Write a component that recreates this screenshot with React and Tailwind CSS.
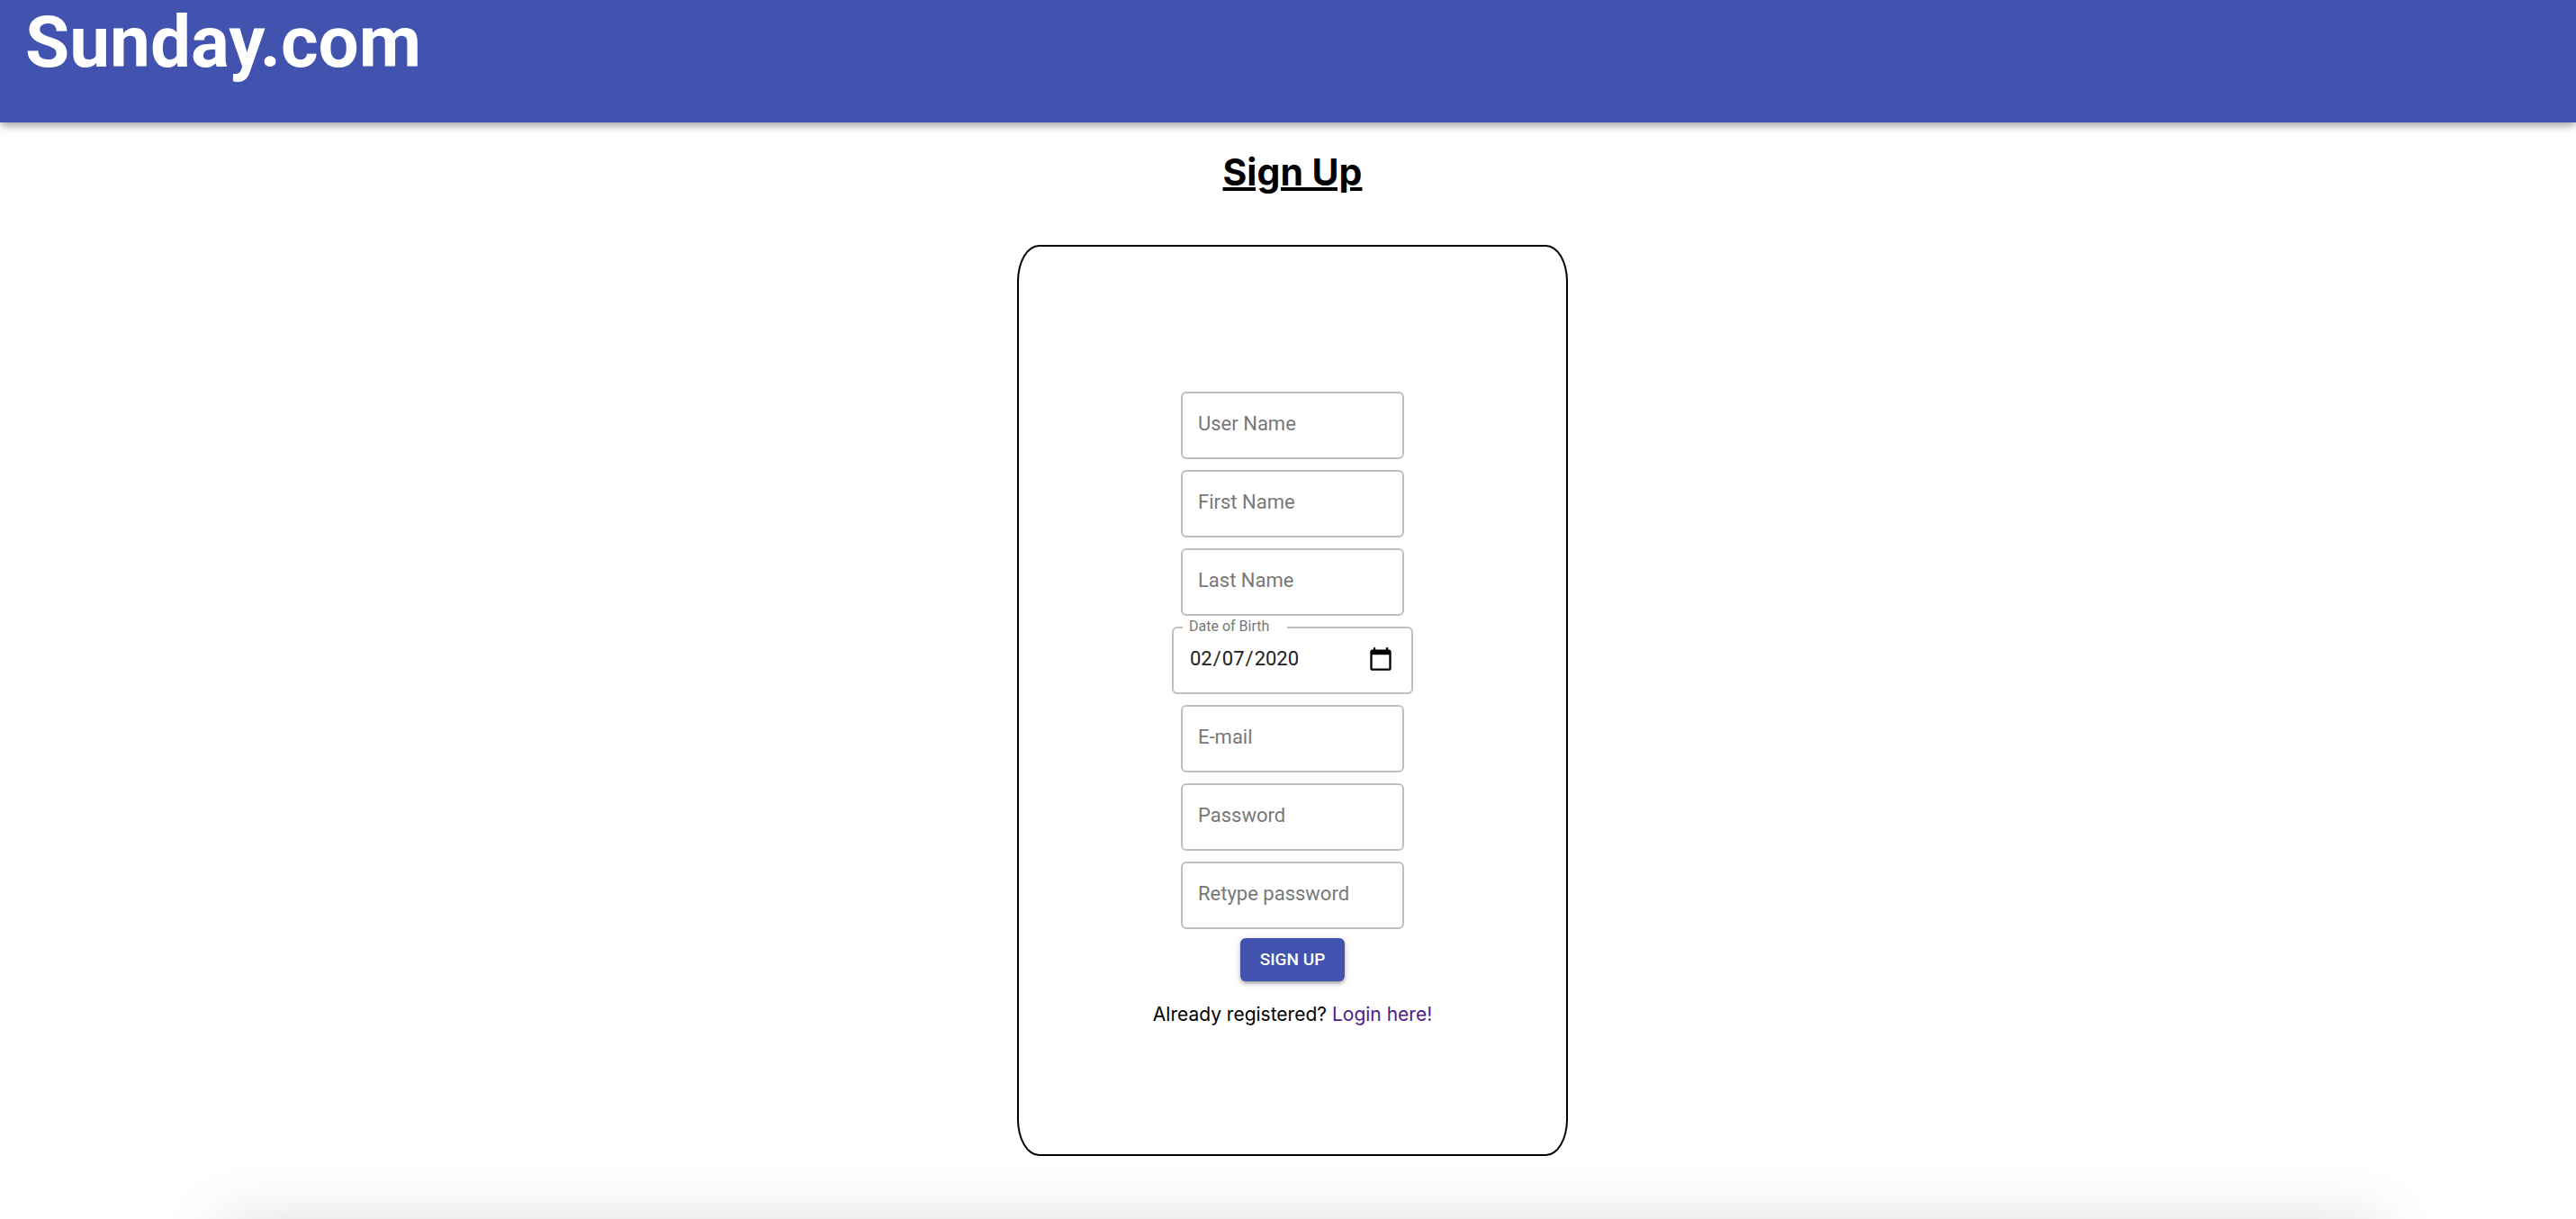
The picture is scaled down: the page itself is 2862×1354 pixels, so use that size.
const inputClass =
  "peer block w-full h-[75px] rounded-md border-2 border-[#bfbfbf] bg-transparent pl-[17px] pr-5 pb-1 text-[22px] text-[#212121] outline-none focus:border-[#4253af]";

function TextField({ id, label, type = "text" }) {
  return (
    <div className="relative w-[248px]">
      <input id={id} name={id} type={type} placeholder=" " className={inputClass} />
      <label
        htmlFor={id}
        className="pointer-events-none absolute left-3 -top-3 bg-white px-[7px] text-base leading-5 text-[#787878] peer-placeholder-shown:top-5 peer-placeholder-shown:text-[22px] peer-placeholder-shown:leading-8"
      >
        {label}
      </label>
    </div>
  );
}

function DateField({ id, label, defaultValue }) {
  return (
    <div className="relative w-[268px]">
      <input
        id={id}
        name={id}
        type="date"
        defaultValue={defaultValue}
        className={`${inputClass} [&::-webkit-calendar-picker-indicator]:h-7 [&::-webkit-calendar-picker-indicator]:w-7 [&::-webkit-calendar-picker-indicator]:bg-[length:28px_28px] [&::-webkit-calendar-picker-indicator]:p-0`}
      />
      <label
        htmlFor={id}
        className="absolute left-3 -top-3 w-[116px] bg-white pl-[7px] text-base leading-6 text-[#787878]"
      >
        {label}
      </label>
    </div>
  );
}

export default function App() {
  return (
    <div className="relative flex min-h-screen flex-col overflow-hidden bg-white font-['Roboto',sans-serif]">
      <header className="h-[136px] bg-[#4253af] px-7 text-white shadow-[0_4px_8px_-2px_rgba(0,0,0,0.2),0_4px_8px_0_rgba(0,0,0,0.14),0_2px_16px_0_rgba(0,0,0,0.12)]">
        <div className="text-[80px] leading-[94px] font-bold">Sunday.com</div>
      </header>

      <main className="flex flex-col items-center pt-7 pl-[10px]">
        <h1 className="font-['Inter',sans-serif] text-[41px] leading-[54px] font-bold text-black underline decoration-4">
          Sign Up
        </h1>

        <form
          onSubmit={(e) => e.preventDefault()}
          className="mt-[54px] flex w-[612px] flex-col items-center rounded-[4%] border-2 border-black pt-[161px] pb-[139px]"
        >
          <div className="flex flex-col items-center gap-3">
            <TextField id="username" label="User Name" />
            <TextField id="first-name" label="First Name" />
            <TextField id="last-name" label="Last Name" />
            <DateField id="birth-date" label="Date of Birth" defaultValue="2020-02-07" />
            <TextField id="email" label="E-mail" type="email" />
            <TextField id="password" label="Password" type="password" />
            <TextField id="password-again" label="Retype password" type="password" />
          </div>
          <button
            type="submit"
            className="mt-[10px] h-12 w-[116px] rounded-md bg-[#4253af] text-[19px] font-medium text-white shadow-[0_3px_4px_-2px_rgba(0,0,0,0.3),0_2px_6px_0_rgba(0,0,0,0.25)]"
          >
            SIGN UP
          </button>
          <p className="mt-[21px] font-['Inter',sans-serif] text-[21px] leading-8 text-black">
            Already registered?{" "}
            <a href="#login" className="text-[#4e1d89]">Login here!</a>
          </p>
        </form>
      </main>

      {/* soft shadow rising from the lower edge */}
      <div
        aria-hidden="true"
        className="pointer-events-none absolute left-[8.5%] right-[7.5%] top-full h-40 shadow-[0_0_68px_0_rgba(0,0,0,0.13)]"
      />
    </div>
  );
}
